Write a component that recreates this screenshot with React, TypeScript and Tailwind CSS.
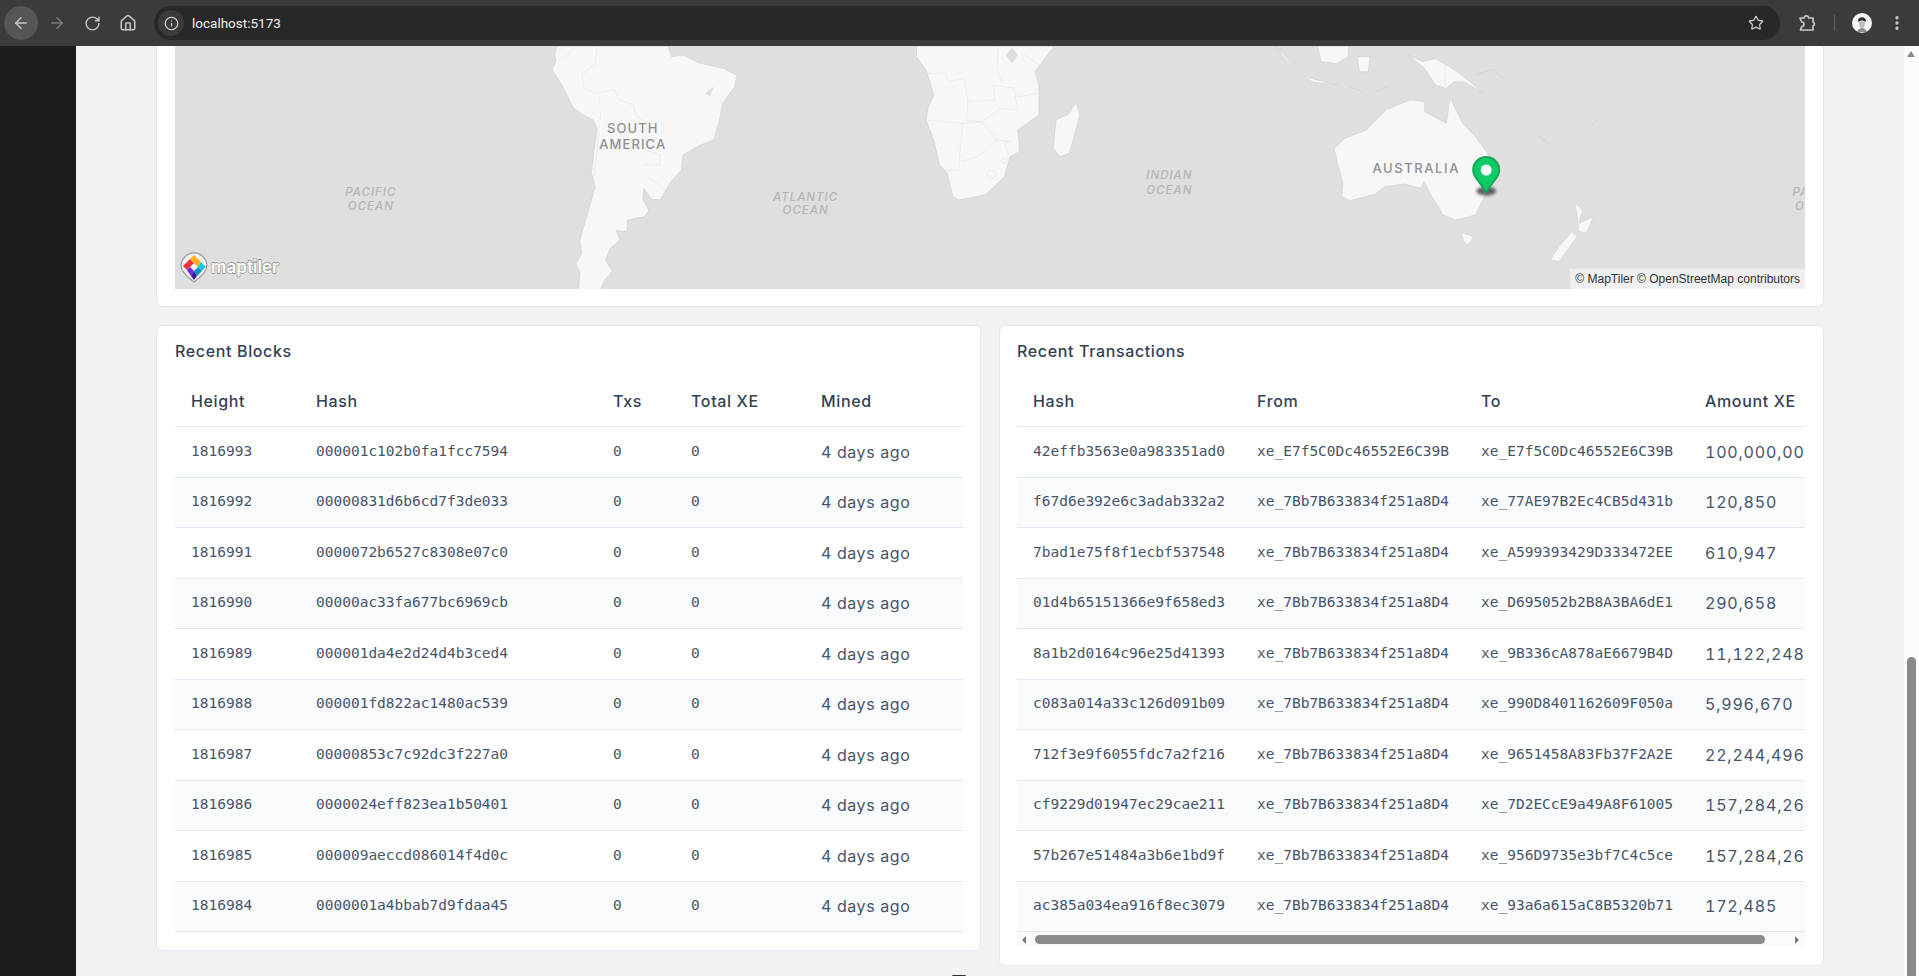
import { ArrowLeft, ArrowRight, RotateCw, House, Info, Star, EllipsisVertical } from "lucide-react";

const blocks = [
  ["1816993", "000001c102b0fa1fcc7594"],
  ["1816992", "00000831d6b6cd7f3de033"],
  ["1816991", "0000072b6527c8308e07c0"],
  ["1816990", "00000ac33fa677bc6969cb"],
  ["1816989", "000001da4e2d24d4b3ced4"],
  ["1816988", "000001fd822ac1480ac539"],
  ["1816987", "00000853c7c92dc3f227a0"],
  ["1816986", "0000024eff823ea1b50401"],
  ["1816985", "000009aeccd086014f4d0c"],
  ["1816984", "0000001a4bbab7d9fdaa45"],
];

const txs = [
  ["42effb3563e0a983351ad0", "xe_E7f5C0Dc46552E6C39B", "xe_E7f5C0Dc46552E6C39B", "100,000,000"],
  ["f67d6e392e6c3adab332a2", "xe_7Bb7B633834f251a8D4", "xe_77AE97B2Ec4CB5d431b", "120,850"],
  ["7bad1e75f8f1ecbf537548", "xe_7Bb7B633834f251a8D4", "xe_A599393429D333472EE", "610,947"],
  ["01d4b65151366e9f658ed3", "xe_7Bb7B633834f251a8D4", "xe_D695052b2B8A3BA6dE1", "290,658"],
  ["8a1b2d0164c96e25d41393", "xe_7Bb7B633834f251a8D4", "xe_9B336cA878aE6679B4D", "11,122,248"],
  ["c083a014a33c126d091b09", "xe_7Bb7B633834f251a8D4", "xe_990D8401162609F050a", "5,996,670"],
  ["712f3e9f6055fdc7a2f216", "xe_7Bb7B633834f251a8D4", "xe_9651458A83Fb37F2A2E", "22,244,496"],
  ["cf9229d01947ec29cae211", "xe_7Bb7B633834f251a8D4", "xe_7D2ECcE9a49A8F61005", "157,284,264"],
  ["57b267e51484a3b6e1bd9f", "xe_7Bb7B633834f251a8D4", "xe_956D9735e3bf7C4c5ce", "157,284,264"],
  ["ac385a034ea916f8ec3079", "xe_7Bb7B633834f251a8D4", "xe_93a6a615aC8B5320b71", "172,485"],
];

const mono = "font-['DejaVu_Sans_Mono',monospace] text-[14.5px] text-[#475569]";
const sans = "font-['Inter',sans-serif] text-[16px] tracking-[0.035em] text-[#475569]";
const amountText = "font-['Inter',sans-serif] text-[16px] tabular-nums tracking-[0.05em] text-[#475569]";
const head = "font-['Inter',sans-serif] text-[16px] font-medium tracking-[0.04em] text-[#334155]";
const blockCols = "grid grid-cols-[125px_297px_78px_130px_158px]";
const txCols = "grid grid-cols-[224px_224px_224px_200px]";

function Chrome() {
  return (
    <div className="flex h-[46px] shrink-0 items-center bg-[#3b3b3b] text-[#c7c7c7]">
      <div className="ml-[4px] flex h-[34px] w-[34px] items-center justify-center rounded-full bg-[#565656]">
        <ArrowLeft size={18} strokeWidth={2} />
      </div>
      <ArrowRight size={18} strokeWidth={2} className="ml-[10px] text-[#7b7b7b]" />
      <RotateCw size={17} strokeWidth={2} className="ml-[18px]" />
      <House size={18} strokeWidth={2} className="ml-[18px]" />
      <div className="ml-[17px] flex h-[34px] w-[1626px] items-center rounded-full bg-[#282828]">
        <div className="ml-[4px] flex h-[26px] w-[26px] items-center justify-center rounded-full bg-[#3b3b3b] text-[#e3e3e3]">
          <Info size={15} strokeWidth={1.8} />
        </div>
        <span className="ml-[8px] font-['Roboto',sans-serif] text-[13.5px] text-[#ededed]">localhost:5173</span>
        <Star size={16} strokeWidth={1.8} className="ml-auto mr-[16px] text-[#d0d0d0]" />
      </div>
      <svg width="20" height="20" viewBox="0 0 20 20" fill="none" stroke="currentColor" strokeWidth="1.7" className="ml-[17px]">
        <path d="M3 5h4.2a2.2 2.2 0 0 1 4.4 0H16v4a2 2 0 0 1 0 3.8V17H3.5l1.2-3.5a2 2 0 0 0 0-4.5z" strokeLinejoin="round" />
      </svg>
      <div className="ml-[17px] h-[16px] w-px bg-[#5e5e5e]" />
      <svg width="20" height="20" viewBox="0 0 20 20" className="ml-[17px]">
        <circle cx="10" cy="10" r="10" fill="#f4f4f4" />
        <path d="M6 8c0-5 8-5 8 0l-1 1c-1-2-5-2-6 0z" fill="#2b2b2b" />
        <path d="M7 9c1-1 5-1 6 0 0 4-1 6-3 6s-3-2-3-6z" fill="#bdbdbd" />
        <path d="M5 19c1-3 3-4 5-4s4 1 5 4z" fill="#8d8d8d" />
      </svg>
      <EllipsisVertical size={18} strokeWidth={2.4} className="ml-[16px]" />
    </div>
  );
}

function WorldMap() {
  return (
    <svg viewBox="175 46 1631 243" className="block h-[243px] w-full bg-[#dfdfdf]">
      {/* south america + africa, traced in zoom coords */}
      <g transform="translate(540 40) scale(0.3827 0.3333)" fill="#f7f7f7" stroke="#cbcbcb" strokeWidth="1.6">
        <path d="M45 18 L38 45 L42 62 L32 90 L48 118 L60 140 L88 205 L118 228 L140 240 L150 265 L142 330 L135 400 L145 440 L130 500 L115 560 L105 600 L110 640 L95 670 L105 700 L100 760 L155 760 L170 720 L190 695 L172 660 L185 625 L210 600 L200 572 L228 575 L230 540 L275 530 L285 510 L270 480 L272 445 L292 478 L315 480 L340 430 L370 390 L375 345 L420 315 L455 300 L470 240 L478 190 L510 140 L515 105 L480 85 L415 68 L375 45 L345 50 L335 18 Z" />
        <path d="M985 18 L985 50 L1010 90 L1030 165 L1015 205 L1010 240 L1030 300 L1045 375 L1065 400 L1080 470 L1095 480 L1165 465 L1215 410 L1230 350 L1255 335 L1250 270 L1305 225 L1305 135 L1295 95 L1345 18 Z" />
        <path d="M1402 185 L1412 225 L1385 340 L1360 350 L1342 325 L1350 240 L1385 220 Z" />
        <g fill="none" stroke="#e6e6e6" strokeWidth="2">
          <path d="M90 25 L60 60 M150 18 L145 70 L110 105 L115 145 L145 160 L195 148 L205 178 L245 195 L250 225 L280 250 L278 330 L315 345 L315 375 L270 375 M155 170 L160 240 M280 410 L330 450 M140 420 L155 280" />
          <path d="M1015 100 L1060 100 L1070 125 L1110 115 L1120 185 L1190 180 L1185 135 L1240 145 L1250 210 L1205 205 L1155 245 L1105 250 L1010 240 M1105 250 L1095 390 L1060 390 M1155 245 L1195 300 L1230 305 L1215 305 L1225 345 M1195 300 L1145 350 L1100 365 M1120 185 L1115 240 L1155 245 M1250 170 L1305 160 M1200 18 L1195 85 L1210 130 M1260 40 L1320 85" />
          <circle cx="1181" cy="403" r="12" />
          <circle cx="1215" cy="362" r="8" />
        </g>
        <path d="M1218 45 L1235 22 L1250 45 L1235 70 Z" fill="#dedede" stroke="none" />
        <path d="M432 160 L455 140 L445 170 Z" fill="#dedede" stroke="none" />
      </g>

      {/* australia, nz, indonesia */}
      <g transform="translate(1240 40) scale(0.3635 0.3333)" fill="#f7f7f7" stroke="#cbcbcb" strokeWidth="1.6">
        <path d="M262 325 L270 370 L285 430 L282 470 L305 482 L375 462 L400 440 L455 432 L500 445 L508 425 L530 470 L545 495 L560 525 L595 540 L650 525 L675 470 L690 400 L690 350 L650 290 L615 250 L590 195 L580 170 L570 250 L510 215 L510 185 L470 180 L405 208 L350 270 L290 295 Z" />
        <path d="M610 578 L645 590 L630 615 L618 605 Z" />
        <path d="M925 490 L945 510 L935 550 L975 530 L955 580 L935 575 Z" />
        <path d="M915 575 L930 590 L880 665 L855 660 L880 620 Z" />
        <path d="M465 45 L505 65 L540 55 L600 95 L640 130 L668 160 L620 125 L590 125 L570 145 L540 135 L510 85 Z" />
        <path d="M100 18 L160 90 L180 110 L270 135 L200 125 L170 105 L120 50 Z" />
        <path d="M215 18 L300 18 L300 50 L270 70 L225 65 Z" />
        <path d="M325 50 L360 50 L355 95 L330 95 Z" />
        <path d="M300 138 L340 155 M375 155 L410 140 M650 105 L695 88 L728 115 M825 290 L852 310 M968 255 L990 238" fill="none" />
        <path d="M566 60 L566 140" fill="none" stroke="#e0e0e0" />
      </g>

      {/* labels */}
      <g textAnchor="middle" fill="#8f8f8f" fontSize="13" fontWeight="500" letterSpacing="1.1">
        <text x="633" y="133">SOUTH</text>
        <text x="633" y="149">AMERICA</text>
        <text x="1417" y="173" letterSpacing="1.6">AUSTRALIA</text>
      </g>
      <g textAnchor="middle" fill="#b5b5b5" fontSize="11.5" fontStyle="italic" fontWeight="500" letterSpacing="1">
        <text x="371" y="196">PACIFIC</text>
        <text x="371" y="210">OCEAN</text>
        <text x="806" y="201">ATLANTIC</text>
        <text x="806" y="214">OCEAN</text>
        <text x="1170" y="179">INDIAN</text>
        <text x="1170" y="194">OCEAN</text>
        <text x="1819" y="196">PACIFIC</text>
        <text x="1819" y="210">OCEAN</text>
      </g>

      {/* pin */}
      <g transform="translate(-1 0)">
        <ellipse cx="1488" cy="191" rx="10" ry="4.5" fill="#333" opacity="0.75" className="blur-[1.5px]" />
        <path d="M1488 194 C1482 183 1474 178 1474 170 A14 14 0 0 1 1502 170 C1502 178 1494 183 1488 194 Z" fill="#14a653" />
        <path d="M1488 191 C1483 182 1476 177 1476 170 A12 12 0 0 1 1500 170 C1500 177 1493 182 1488 191 Z" fill="#0fcb66" />
        <circle cx="1488" cy="170" r="5.5" fill="#fff" />
      </g>

      {/* maptiler logo */}
      <path d="M194 253 C188 253 181 258 181 266 C181 272 190 279 194 282 C198 279 207 272 207 266 C207 258 200 253 194 253 Z" fill="#f2f2f2" stroke="#9a9a9a" strokeWidth="1.2" />
      <polygon points="183,266 190,259 194,263 190,267 187,270" fill="#f5323a" />
      <polygon points="190,259 194,255 201,262 198,267 194,263" fill="#fbb017" />
      <polygon points="201,262 205.5,267 202,271 198,267" fill="#12c9dc" />
      <polygon points="198,267 202,271 197,276 194,271" fill="#0c93c9" />
      <polygon points="187,270 190,267 194,271 191,276" fill="#7426d9" />
      <polygon points="191,276 194,271 197,276 194,280" fill="#3d1a94" />
      <text x="211" y="273" fontSize="18" fontWeight="600" fill="#fff" stroke="#8e8e8e" strokeWidth="1.3" paintOrder="stroke" textLength="68" lengthAdjust="spacingAndGlyphs">maptiler</text>
    </svg>
  );
}

function RecentBlocks() {
  return (
    <div className="rounded-md border border-[#e2e8f0] bg-white pb-[18px] pl-[18px] pr-[17px]">
      <h2 className={`flex h-[50.5px] items-center pb-[1px] ${head}`}>Recent Blocks</h2>
      <div className={`${blockCols} ${head} h-[50.5px] items-center border-b border-[#e2e8f0]`}>
        {["Height", "Hash", "Txs", "Total XE", "Mined"].map((h) => (
          <div key={h} className="px-[16px]">{h}</div>
        ))}
      </div>
      {blocks.map(([height, hash], i) => (
        <div key={height} className={`${blockCols} h-[50.5px] items-center border-b border-[#e2e8f0] ${i % 2 ? "bg-[#f8fafc]" : ""}`}>
          <div className={`px-[16px] ${mono}`}>{height}</div>
          <div className={`px-[16px] ${mono}`}>{hash}</div>
          <div className={`px-[16px] ${mono}`}>0</div>
          <div className={`px-[16px] ${mono}`}>0</div>
          <div className={`px-[16px] ${sans}`}>4 days ago</div>
        </div>
      ))}
    </div>
  );
}

function RecentTransactions() {
  return (
    <div className="rounded-md border border-[#e2e8f0] bg-white pb-[18px] pl-[17px] pr-[18px]">
      <h2 className={`flex h-[50.5px] items-center pb-[1px] ${head}`}>Recent Transactions</h2>
      <div className="overflow-hidden">
        <div className={`${txCols} ${head} h-[50.5px] items-center border-b border-[#e2e8f0]`}>
          {["Hash", "From", "To", "Amount XE"].map((h) => (
            <div key={h} className="px-[16px] whitespace-nowrap">{h}</div>
          ))}
        </div>
        {txs.map(([hash, from, to, amount], i) => (
          <div key={hash} className={`${txCols} h-[50.5px] items-center border-b border-[#e2e8f0] ${i % 2 ? "bg-[#f8fafc]" : ""}`}>
            <div className={`overflow-hidden pl-[16px] whitespace-nowrap ${mono}`}>{hash}</div>
            <div className={`overflow-hidden pl-[16px] whitespace-nowrap ${mono}`}>{from}</div>
            <div className={`overflow-hidden pl-[16px] whitespace-nowrap ${mono}`}>{to}</div>
            <div className={`px-[16px] whitespace-nowrap ${amountText}`}>{amount}</div>
          </div>
        ))}
        <div className="flex h-[15px] items-center bg-[#fafafa]">
          <div className="ml-[5px] h-0 w-0 border-y-[4px] border-r-[4px] border-y-transparent border-r-[#7a7a7a]" />
          <div className="ml-[9px] h-[9px] w-[730px] rounded-full bg-[#8b8b8b]" />
          <div className="ml-[30px] h-0 w-0 border-y-[4px] border-l-[4px] border-y-transparent border-l-[#7a7a7a]" />
        </div>
      </div>
    </div>
  );
}

export default function App() {
  return (
    <div className="flex h-[976px] w-[1919px] flex-col overflow-hidden bg-[#f2f2f2] font-['Inter',sans-serif]">
      <Chrome />
      <div className="flex min-h-0 flex-1">
        <aside className="w-[76px] shrink-0 bg-[#1c1c1c]" />
        <main className="relative min-w-0 flex-1 px-[80px]">
          <div className="relative rounded-b-md border-x border-b border-[#e2e8f0] bg-white px-[18px] pb-[17px]">
            <WorldMap />
            <div className="absolute bottom-[17px] right-[18px] flex h-[20px] items-center bg-[#efefef] px-[5px] font-['Liberation_Sans',sans-serif] text-[12px] text-[#333]">
              © MapTiler © OpenStreetMap contributors
            </div>
          </div>
          <div className="mt-[18px] grid grid-cols-2 items-start gap-[18px]">
            <RecentBlocks />
            <RecentTransactions />
          </div>
          <div className="absolute bottom-0 left-[876px] h-[1px] w-[14px] rounded-t-full bg-[#333]" />
        </main>
        <div className="relative w-[15px] shrink-0 bg-[#fbfbfb]">
          <div className="absolute left-[3px] top-[5px] h-0 w-0 border-x-[4.5px] border-b-[6px] border-x-transparent border-b-[#8a8a8a]" />
          <div className="absolute bottom-0 left-[3px] top-[611px] w-[9px] rounded-t-full bg-[#8b8b8b]" />
        </div>
      </div>
    </div>
  );
}
